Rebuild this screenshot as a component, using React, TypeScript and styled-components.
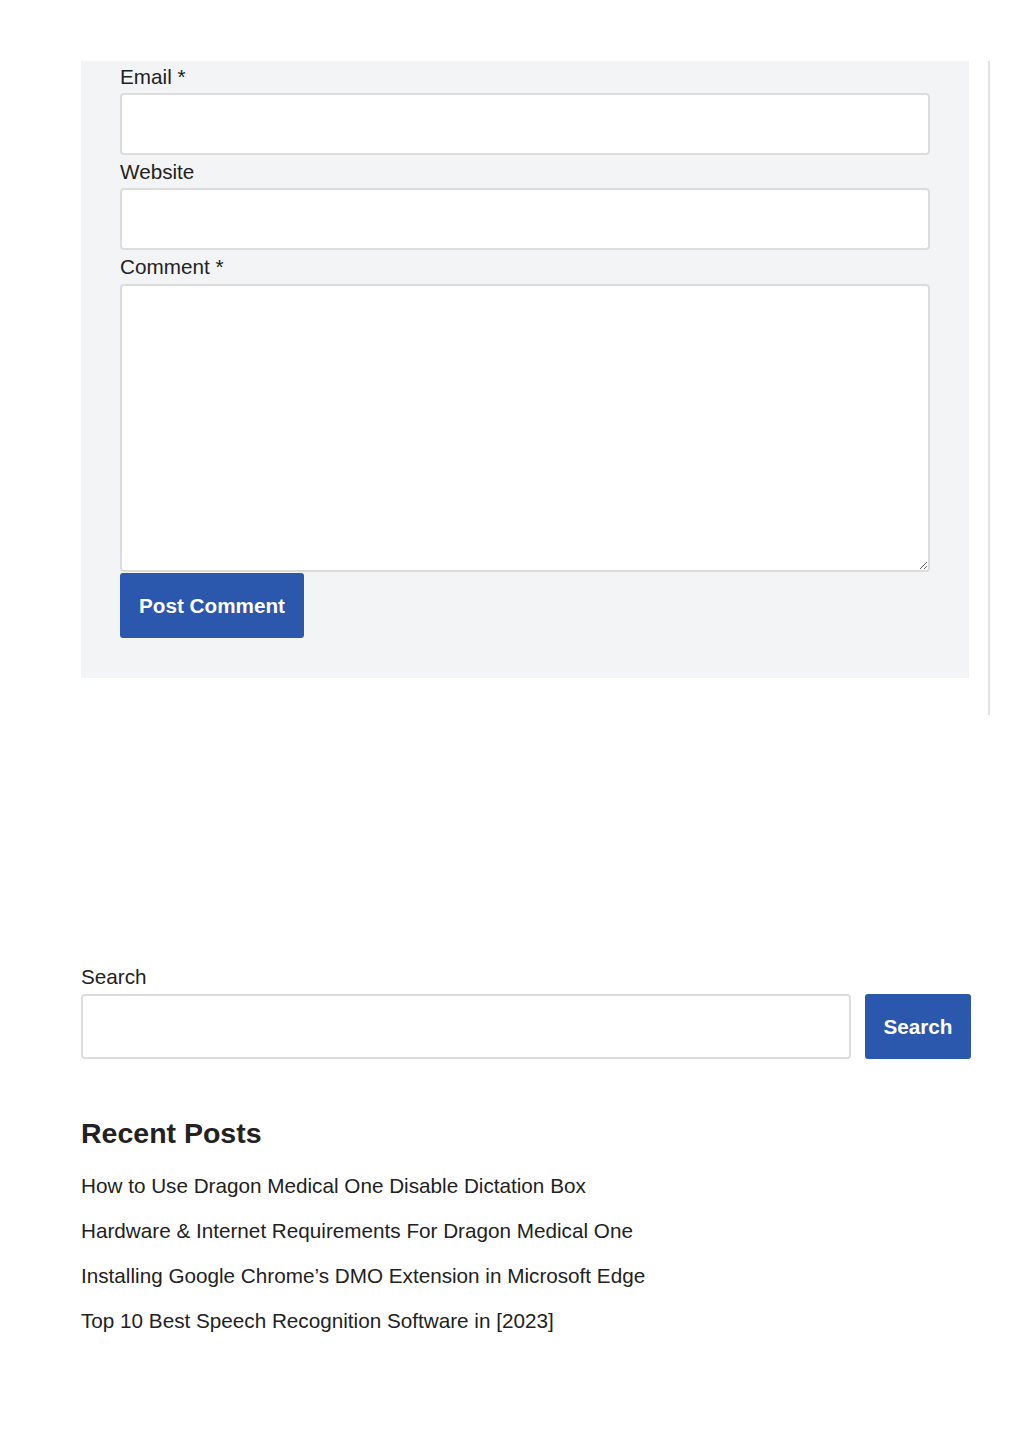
import styled, { createGlobalStyle } from "styled-components"

const GlobalStyle = createGlobalStyle`
  body {
    margin: 0;
    background: #fff;
    font-family: "Liberation Sans", Arial, sans-serif;
    color: #222;
  }
`

const Page = styled.div`
  width: 1024px;
  padding: 61px 0 0 81px;
  box-sizing: border-box;
`

const TopRow = styled.div`
  display: flex;
  align-items: flex-start;
`

const Divider = styled.div`
  width: 2px;
  height: 654px;
  background: #e2e2e2;
  margin-left: 19px;
`

const CommentForm = styled.form`
  width: 888px;
  background: #f3f4f5;
  padding: 0 39px 40px 39px;
  box-sizing: border-box;
  display: flex;
  flex-direction: column;
`

const Label = styled.label<{ $h?: number }>`
  display: block;
  font-size: 20.7px;
  line-height: ${(p) => p.$h ?? 33}px;
  height: ${(p) => p.$h ?? 33}px;
`

const Field = styled.input`
  display: block;
  width: 810px;
  height: 62px;
  box-sizing: border-box;
  border: 2px solid #dcdcdc;
  border-radius: 4px;
  background: #fff;
  font-size: 20px;
  outline: none;
`

const TextArea = styled.textarea`
  display: block;
  width: 810px;
  height: 288px;
  box-sizing: border-box;
  border: 2px solid #dcdcdc;
  border-radius: 4px;
  background: #fff;
  font-size: 20px;
  margin-bottom: 1px;
`

const Button = styled.button`
  background: #2b57ad;
  color: #fff;
  border: none;
  border-radius: 3px;
  font-family: "Liberation Sans", Arial, sans-serif;
  font-weight: 700;
  font-size: 20.7px;
  height: 65px;
  padding: 0 19px;
  cursor: pointer;
  align-self: flex-start;
`

const SearchBlock = styled.div`
  margin-top: 245px;
  width: 890px;
`

const SearchLabel = styled.label`
  display: block;
  font-size: 20.7px;
  line-height: 34px;
`

const SearchRow = styled.div`
  display: flex;
  gap: 14px;
`

const SearchInput = styled(Field)`
  flex: 1;
  height: 65px;
`

const SearchButton = styled(Button)`
  width: 106px;
  padding: 0;
  flex-shrink: 0;
`

const Heading = styled.h2`
  font-size: 28.5px;
  font-weight: 700;
  margin: 57px 0 0 0;
  line-height: 34px;
  color: #222;
`

const PostList = styled.ul`
  list-style: none;
  margin: 13px 0 0 0;
  padding: 0;
`

const PostItem = styled.li`
  font-size: 20.7px;
  line-height: 45px;
`

const PostLink = styled.a`
  color: #222;
  text-decoration: none;
`

const posts = [
  "How to Use Dragon Medical One Disable Dictation Box",
  "Hardware & Internet Requirements For Dragon Medical One",
  "Installing Google Chrome’s DMO Extension in Microsoft Edge",
  "Top 10 Best Speech Recognition Software in [2023]",
]

function App() {
  return (
    <>
      <GlobalStyle />
      <Page>
        <TopRow>
          <CommentForm onSubmit={(e) => e.preventDefault()}>
            <Label $h={32}>Email *</Label>
            <Field type="email" />
            <Label>Website</Label>
            <Field type="url" />
            <Label $h={34}>Comment *</Label>
            <TextArea />
            <Button type="submit">Post Comment</Button>
          </CommentForm>
          <Divider />
        </TopRow>
        <SearchBlock>
          <SearchLabel>Search</SearchLabel>
          <SearchRow>
            <SearchInput type="search" />
            <SearchButton type="button">Search</SearchButton>
          </SearchRow>
          <Heading>Recent Posts</Heading>
          <PostList>
            {posts.map((title) => (
              <PostItem key={title}>
                <PostLink href="#">{title}</PostLink>
              </PostItem>
            ))}
          </PostList>
        </SearchBlock>
      </Page>
    </>
  )
}

export default App
